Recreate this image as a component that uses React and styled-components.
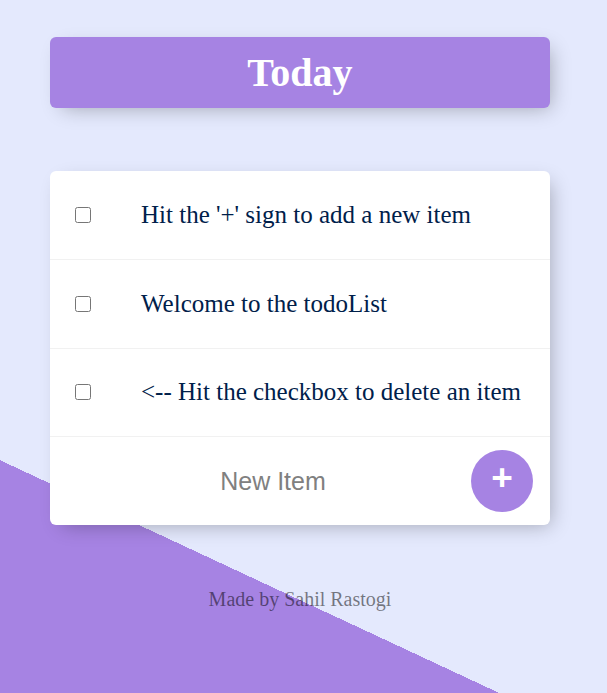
import React from "react";
import styled, { createGlobalStyle } from "styled-components";

const GlobalStyle = createGlobalStyle`
  html, body { margin: 0; padding: 0; }
  body {
    font-family: "Liberation Serif", "Times New Roman", serif;
    background: #E4E9FD;
  }
  * { box-sizing: border-box; }
`;

const Page = styled.div`
  min-height: 100vh;
  padding: 37px 0 20px 50px;
  background-color: #E4E9FD;
  background-image: linear-gradient(25deg, #A683E3 211px, #E4E9FD 211px);
`;

const Box = styled.div`
  width: 500px;
  border-radius: 6px;
  background: ${(p) => (p.$heading ? "#A683E3" : "#ffffff")};
  box-shadow: 6px 6px 19px -6px rgba(0, 0, 0, 0.3);
  margin-bottom: ${(p) => (p.$heading ? "63px" : "0")};
  text-align: ${(p) => (p.$heading ? "center" : "left")};
  overflow: hidden;
`;

const Title = styled.h1`
  margin: 0;
  padding: 12.5px;
  font-size: 40px;
  line-height: 46px;
  font-weight: 700;
  color: #ffffff;
`;

const Item = styled.div`
  height: ${(p) => (p.$last ? "87.5px" : "88.75px")};
  display: flex;
  align-items: center;
  border-bottom: ${(p) => (p.$last ? "0" : "1px solid #F1F1F1")};
`;

const Check = styled.input`
  width: 16px;
  height: 16px;
  margin: 0 25px;
  flex: none;
`;

const Text = styled.p`
  margin: 0;
  padding: 25px;
  font-size: 25px;
  font-weight: 200;
  color: #00204a;
  white-space: nowrap;
`;

const Form = styled.form`
  display: flex;
  align-items: center;
  margin-left: 28px;
`;

const NewInput = styled.input`
  text-align: center;
  height: 75px;
  width: 390px;
  border: none;
  background: transparent;
  font-family: "Liberation Sans", Arial, sans-serif;
  font-size: 25px;
  font-weight: 200;
  padding: 0;
  margin-right: 3px;
  outline: none;
  &::placeholder { color: grey; opacity: 1; }
`;

const AddButton = styled.button`
  width: 62px;
  height: 62px;
  border-radius: 50%;
  border: 0;
  background-color: #A683E3;
  color: #ffffff;
  font-family: "Liberation Sans", Arial, sans-serif;
  font-size: 37px;
  font-weight: 700;
  line-height: 1;
  padding: 0 0 8px 0;
  display: flex;
  align-items: center;
  justify-content: center;
  flex: none;
`;

const Footer = styled.footer`
  width: 500px;
  margin-top: 63px;
  text-align: center;
  font-size: 20px;
  line-height: 23px;
  color: rgba(0, 0, 0, 0.5);
`;

const items = [
  "Hit the '+' sign to add a new item",
  "Welcome to the todoList",
  "<-- Hit the checkbox to delete an item",
];

export default function App() {
  return (
    <>
      <GlobalStyle />
      <Page>
        <Box $heading>
          <Title>Today</Title>
        </Box>
        <Box>
          {items.map((t) => (
            <Item key={t}>
              <Check type="checkbox" />
              <Text>{t}</Text>
            </Item>
          ))}
          <Item $last>
            <Form onSubmit={(e) => e.preventDefault()}>
              <NewInput type="text" placeholder="New Item" />
              <AddButton type="submit">+</AddButton>
            </Form>
          </Item>
        </Box>
        <Footer>Made by Sahil Rastogi</Footer>
      </Page>
    </>
  );
}
